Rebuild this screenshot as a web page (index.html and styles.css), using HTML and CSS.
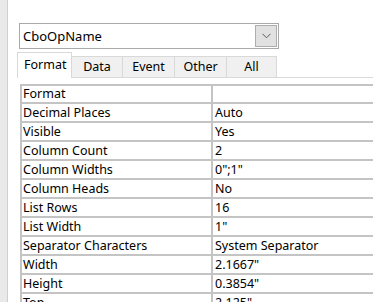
FILE: index.html
```html
<!DOCTYPE html>
<html>
<head>
<meta charset="utf-8">
<link rel="stylesheet" href="styles.css">
</head>
<body>
<div class="strip"></div>
<div class="main">
  <div class="combo">
    <div class="combo-text">CboOpName</div>
    <div class="combo-btn">
      <svg width="9" height="6" viewBox="0 0 9 6"><path d="M0.5 0.8 L4.5 4.8 L8.5 0.8" fill="none" stroke="#5a5a5a" stroke-width="1"/></svg>
    </div>
  </div>
  <div class="tabs">
    <div class="tab active t1">Format</div>
    <div class="tab t2">Data</div>
    <div class="tab t3">Event</div>
    <div class="tab t4">Other</div>
    <div class="tab t5">All</div>
  </div>
  <div class="grid">
    <div class="row first"><div class="k">Format</div><div class="v"></div></div>
    <div class="row"><div class="k">Decimal Places</div><div class="v">Auto</div></div>
    <div class="row"><div class="k">Visible</div><div class="v">Yes</div></div>
    <div class="row"><div class="k">Column Count</div><div class="v">2</div></div>
    <div class="row"><div class="k">Column Widths</div><div class="v">0";1"</div></div>
    <div class="row"><div class="k">Column Heads</div><div class="v">No</div></div>
    <div class="row"><div class="k">List Rows</div><div class="v">16</div></div>
    <div class="row"><div class="k">List Width</div><div class="v">1"</div></div>
    <div class="row"><div class="k">Separator Characters</div><div class="v">System Separator</div></div>
    <div class="row"><div class="k">Width</div><div class="v">2.1667"</div></div>
    <div class="row"><div class="k">Height</div><div class="v">0.3854"</div></div>
    <div class="row"><div class="k">Top</div><div class="v">2.125"</div></div>
  </div>
</div>
</body>
</html>
```
FILE: styles.css
```css
html, body {
  margin: 0;
  padding: 0;
  height: 302px;
  overflow: hidden;
  background: #ffffff;
}
body {
  display: flex;
  font-family: "Noto Sans", "Open Sans", sans-serif;
  font-size: 12.5px;
  color: #000000;
}
.strip {
  width: 7px;
  flex: none;
  background: #e9e9e9;
  border-right: 1px solid #cfcfcf;
}
.main {
  flex: 1;
  padding-left: 11px;
  padding-top: 23px;
  overflow: hidden;
}
.combo {
  width: 257px;
  height: 24px;
  border: 1px solid #a9a9a9;
  display: flex;
  align-items: center;
  justify-content: space-between;
  padding: 0 1px 0 0;
}
.combo-text {
  padding-left: 3px;
  font-size: 13px;
  line-height: 24px;
}
.combo-btn {
  width: 20px;
  height: 20px;
  border: 1px solid #adadad;
  background: #e1e1e1;
  display: flex;
  align-items: center;
  justify-content: center;
}
.tabs {
  display: flex;
  align-items: flex-end;
  margin-top: 4px;
  margin-left: -2px;
  height: 24px;
  border-bottom: 1px solid #d9d9d9;
}
.tab {
  height: 20px;
  line-height: 20px;
  text-align: center;
  background: #f0f0f0;
  border: 1px solid #d9d9d9;
  border-bottom: none;
  border-left: none;
  box-sizing: content-box;
}
.tab.active {
  height: 24px;
  line-height: 23px;
  background: #ffffff;
  border-left: 1px solid #d9d9d9;
  margin-bottom: -1px;
  padding-bottom: 1px;
  text-align: left;
  padding-left: 6px;
}
.t1 { width: 47px; }
.t2 { width: 50px; }
.t3 { width: 51px; }
.t4 { width: 51px; }
.t5 { width: 49px; }
.grid {
  margin-top: 6px;
  margin-left: 1px;
  border-top: 2px solid #c4c4c4;
  border-left: 2px solid #c4c4c4;
}
.row {
  display: flex;
  height: 17px;
  line-height: 17px;
  border-bottom: 2px solid #c4c4c4;
}
.row.first {
  height: 16px;
  line-height: 16px;
}
.k {
  width: 188px;
  padding-left: 1px;
  border-right: 2px solid #c4c4c4;
  white-space: nowrap;
}
.v {
  flex: 1;
  padding-left: 2px;
  white-space: nowrap;
}
```
